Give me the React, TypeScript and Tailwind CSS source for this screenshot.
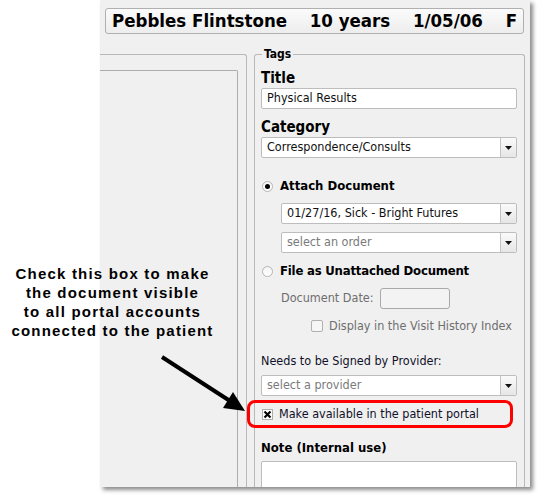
import React from "react"

const ui = "font-['DejaVu_Sans_Condensed','DejaVu_Sans',sans-serif]"

function Caret() {
  return (
    <div className="w-[16px] h-full border-l border-[#c4c4c4] bg-gradient-to-b from-[#fafafa] to-[#e6e6e6] flex items-center justify-center rounded-r-[2px]">
      <svg width="7" height="4" viewBox="0 0 7 4">
        <path d="M0 0h7L3.5 4z" fill="#111" />
      </svg>
    </div>
  )
}

function Select({ value, placeholder, className }: { value: string; placeholder?: boolean; className?: string }) {
  return (
    <div className={`h-[21px] bg-white border border-[#bdbdbd] rounded-[2px] flex items-stretch ${className ?? ""}`}>
      <div className={`flex-1 flex items-center pl-[5px] text-[12.5px] ${placeholder ? "text-[#7a7a7a]" : "text-[#111]"}`}>{value}</div>
      <Caret />
    </div>
  )
}

function Radio({ checked }: { checked?: boolean }) {
  return (
    <div className="w-[11px] h-[11px] rounded-full border border-[#b5b5b5] bg-gradient-to-b from-[#f4f4f4] to-white flex items-center justify-center">
      {checked && <div className="w-[5px] h-[5px] rounded-full bg-black" />}
    </div>
  )
}

export default function App() {
  return (
    <div className={`relative w-[541px] h-[496px] bg-white overflow-hidden ${ui}`}>
      {/* window panel */}
      <div className="ml-[100px] w-[430px] h-[487px] bg-[#f0f0f0] shadow-[3px_3px_4px_rgba(0,0,0,0.45)] flex flex-col overflow-hidden">
        {/* patient banner */}
        <div className="mt-[8px] ml-[5px] w-[419px] h-[26px] shrink-0 border border-[#b0b0b0] rounded-[3px] bg-gradient-to-b from-[#fbfbfb] to-[#ededed] flex items-center justify-between px-[6px] text-[18.5px] font-bold text-black leading-none">
          <span>Pebbles Flintstone</span>
          <span>10 years</span>
          <span>1/05/06</span>
          <span>F</span>
        </div>

        <div className="mt-[20px] flex flex-1 min-h-0">
          {/* left pane */}
          <div className="w-[147px] border-t border-r border-[#b8b8b8] rounded-tr-[3px] pt-[15px] flex">
            <div className="w-[138px] border-t border-r border-[#adadad] rounded-tr-[2px]" />
          </div>

          {/* Tags group */}
          <div className="relative ml-[7px] w-[271px] border border-b-0 border-[#b8b8b8] rounded-t-[3px] pl-[6px] pr-[7px] pt-[15px]">
            <span className="absolute -top-[8px] left-[7px] px-[2px] bg-[#f0f0f0] text-[12px] font-bold leading-[14px] text-black">Tags</span>

            <div className="h-[16px] flex items-center text-[15px] font-bold text-black">Title</div>
            <div className="mt-[2px] h-[21px] bg-white border border-[#bdbdbd] rounded-[2px] flex items-center pl-[5px] text-[12.5px] text-[#111]">Physical Results</div>

            <div className="mt-[10px] h-[16px] flex items-center text-[15px] font-bold text-black">Category</div>
            <Select className="mt-[2px]" value="Correspondence/Consults" />

            <div className="mt-[22px] h-[12px] flex items-center gap-[7px] pl-[1px]">
              <Radio checked />
              <span className="text-[13px] font-bold text-black">Attach Document</span>
            </div>
            <Select className="mt-[11px] ml-[20px]" value="01/27/16, Sick - Bright Futures" />
            <Select className="mt-[8px] ml-[20px]" value="select an order" placeholder />

            <div className="mt-[12px] h-[12px] flex items-center gap-[7px] pl-[1px]">
              <Radio />
              <span className="text-[13px] font-bold text-black tracking-[-0.2px]">File as Unattached Document</span>
            </div>

            <div className="mt-[11px] h-[21px] flex items-center pl-[20px] gap-[6px]">
              <span className="text-[12.5px] text-[#6e6e6e]">Document Date:</span>
              <div className="w-[70px] h-[21px] border border-[#a9a9a9] rounded-[3px] bg-[#f3f3f3]" />
            </div>

            <div className="mt-[11px] h-[12px] flex items-center pl-[50px] gap-[6px]">
              <div className="w-[12px] h-[12px] border border-[#b0b0b0] rounded-[2px] bg-[#f6f6f6]" />
              <span className="text-[12.5px] text-[#6e6e6e]">Display in the Visit History Index</span>
            </div>

            <div className="mt-[23px] h-[12px] flex items-center text-[12.5px] text-[#10102a]">Needs to be Signed by Provider:</div>
            <Select className="mt-[8px]" value="select a provider" placeholder />

            {/* highlighted portal option */}
            <div className="mt-[4px] -ml-[14px] w-[266px] h-[28px] border-[3px] border-[#ff0000] rounded-[8px] flex items-center pl-[12px] gap-[6px]">
              <div className="w-[11px] h-[11px] border border-[#adadad] bg-white flex items-center justify-center">
                <svg width="9" height="9" viewBox="0 0 9 9">
                  <path d="M1.5 1.5l6 6M7.5 1.5l-6 6" stroke="#000" strokeWidth="2.2" />
                </svg>
              </div>
              <span className="text-[12.5px] text-[#10102a]">Make available in the patient portal</span>
            </div>

            <div className="mt-[14px] h-[12px] flex items-center text-[13px] font-bold text-black">Note (Internal use)</div>
            <div className="mt-[7px] h-[40px] bg-white border border-[#bdbdbd] rounded-[2px]" />
          </div>
        </div>
      </div>

      {/* callout */}
      <div className="absolute left-0 top-[264px] w-[225px] text-center font-['Liberation_Sans',Arial,sans-serif] font-bold text-[15px] leading-[19px] tracking-[1.2px] text-black">
        <div>Check this box to make</div>
        <div>the document visible</div>
        <div>to all portal accounts</div>
        <div>connected to the patient</div>
      </div>
      <svg className="absolute left-0 top-0" width="541" height="496" viewBox="0 0 541 496">
        <line x1="162" y1="357" x2="230" y2="401" stroke="#000" strokeWidth="4" />
        <path d="M245 411L223 408L233 392z" fill="#000" />
      </svg>
    </div>
  )
}
